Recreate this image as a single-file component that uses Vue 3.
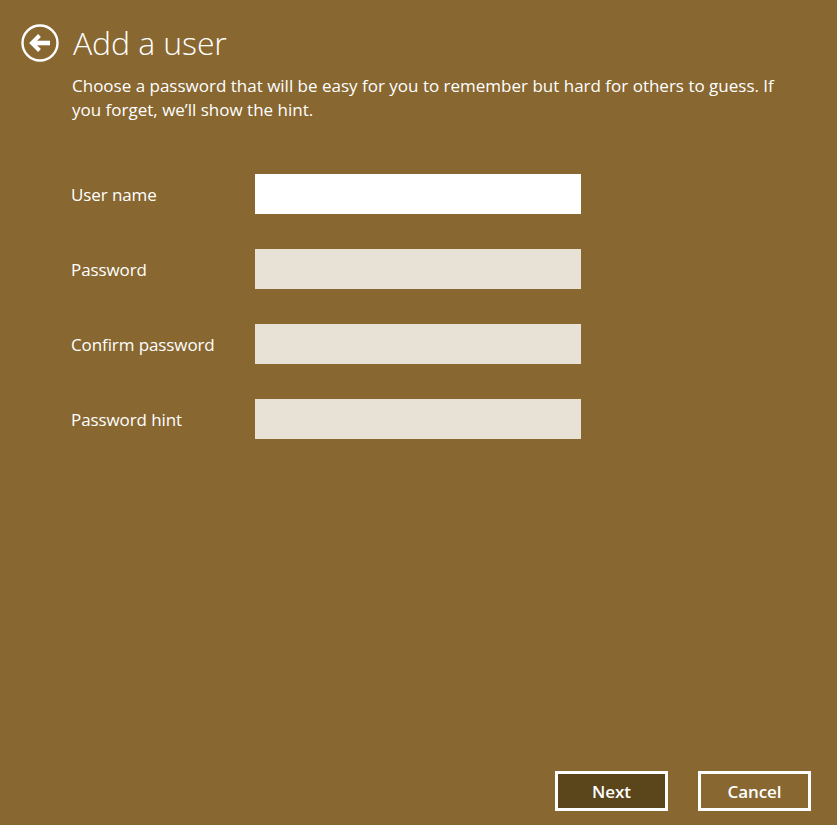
<script setup>
const fields = ['User name', 'Password', 'Confirm password', 'Password hint']
</script>

<template>
  <div class="page">
    <header class="head">
      <svg class="back" width="38" height="38" viewBox="0 0 38 38" fill="none">
        <circle cx="19" cy="19" r="17.5" stroke="#fff" stroke-width="2.4" />
        <path d="M29 19H13" stroke="#fff" stroke-width="4.6" />
        <path d="M18.5 11.5L11 19l7.5 7.5" stroke="#fff" stroke-width="4" />
      </svg>
      <h1 class="title">Add a user</h1>
    </header>
    <p class="intro">Choose a password that will be easy for you to remember but hard for others to guess. If you forget, we’ll show the hint.</p>
    <div class="form">
      <div v-for="(f, i) in fields" :key="f" class="row">
        <label class="label">{{ f }}</label>
        <div class="input" :class="{ active: i === 0 }"></div>
      </div>
    </div>
    <footer class="actions">
      <button class="btn primary">Next</button>
      <button class="btn">Cancel</button>
    </footer>
  </div>
</template>

<style>
html, body { margin: 0; background: #886731; }
</style>

<style scoped>
.page {
  box-sizing: border-box;
  height: 825px;
  width: 837px;
  background: #886731;
  color: #fff;
  font-family: "Open Sans", "Noto Sans", sans-serif;
  display: flex;
  flex-direction: column;
  padding: 24px 26px 14px 21px;
  overflow: hidden;
}
.head { display: flex; align-items: center; gap: 14px; height: 38px; }
.back { flex: none; }
.title { margin: 0; font-size: 32px; font-weight: 300; line-height: 38px; letter-spacing: -0.1px; }
.intro {
  margin: 12px 0 0 51px;
  width: 720px;
  font-size: 17px;
  line-height: 24px;
  letter-spacing: 0;
}
.form { margin-top: 52px; margin-left: 50px; display: flex; flex-direction: column; gap: 35px; }
.row { display: flex; align-items: center; height: 40px; }
.label { width: 184px; font-size: 17px; letter-spacing: -0.1px; }
.input { width: 326px; height: 40px; background: #e7e1d6; }
.input.active { background: #fff; }
.actions { margin-top: auto; display: flex; justify-content: flex-end; gap: 30px; }
.btn {
  box-sizing: border-box;
  width: 113px;
  height: 40px;
  border: 3px solid #fff;
  background: transparent;
  color: #fff;
  font-family: inherit;
  font-size: 17px;
  font-weight: 600;
  letter-spacing: -0.1px;
  padding: 0;
}
.btn.primary { background: #5b451b; }
</style>
